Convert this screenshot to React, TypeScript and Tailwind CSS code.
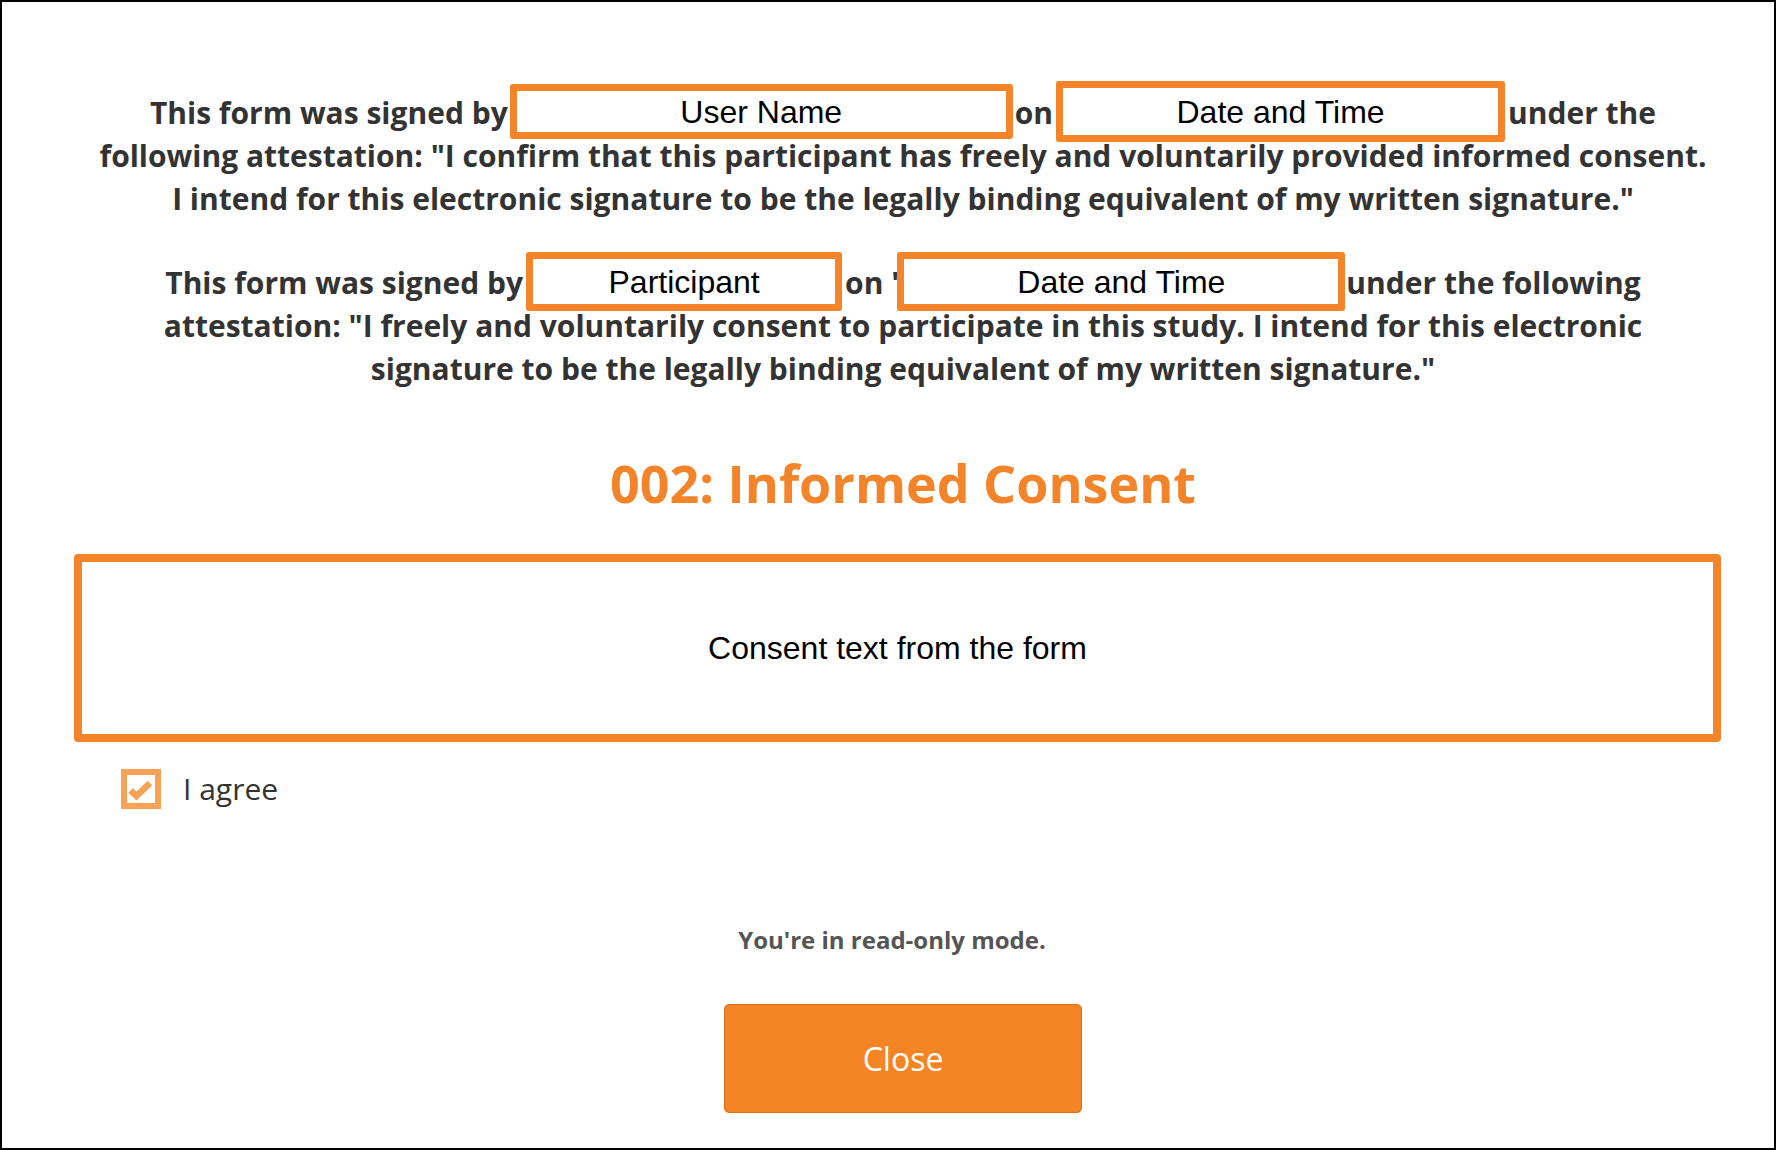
import React from "react";

function Box({ w, h, m, children }: { w: string; h: string; m: string; children: React.ReactNode }) {
  return (
    <span
      className={`relative -top-[4px] inline-flex items-center justify-center align-middle box-border border-[7px] border-[#F4842A] rounded-[3px] bg-white font-['Liberation_Sans',Arial,sans-serif] font-normal text-black text-[32px] leading-none ${w} ${h} ${m}`}
    >
      {children}
    </span>
  );
}

export default function App() {
  return (
    <div className="w-full h-[1150px] box-border border-2 border-black bg-white overflow-hidden font-['Open_Sans',sans-serif]">
      <div className="flex flex-col items-center">
        <p className="mt-[89px] pl-[30px] text-center text-[30px] leading-[43px] font-bold text-[#333333] whitespace-nowrap">
          This form was signed by
          <Box w="w-[503px]" h="h-[55px]" m="-my-[12px] mx-[2px]">User Name</Box>
          on
          <Box w="w-[449px]" h="h-[61px]" m="-my-[15px] mx-[3px]">Date and Time</Box>
          under the
          <br />
          following attestation: "I confirm that this participant has freely and voluntarily provided informed consent.
          <br />
          I intend for this electronic signature to be the legally binding equivalent of my written signature."
        </p>

        <p className="mt-[41px] pl-[30px] text-center text-[30px] leading-[43px] font-bold text-[#333333] whitespace-nowrap">
          This form was signed by
          <Box w="w-[316px]" h="h-[59px]" m="-my-[14px] mx-[3px]">Participant</Box>
          on "
          <Box w="w-[448px]" h="h-[59px]" m="-my-[14px] -ml-[8px] mr-[1px]">Date and Time</Box>
          under the following
          <br />
          attestation: "I freely and voluntarily consent to participate in this study. I intend for this electronic
          <br />
          signature to be the legally binding equivalent of my written signature."
        </p>

        <h1 className="mt-[62px] pl-[30px] text-center text-[52px] leading-[62px] font-bold text-[#F4842A]">
          002: Informed Consent
        </h1>

        <div className="mt-[40px] self-stretch ml-[72px] mr-[53px] h-[188px] box-border border-[8px] border-[#F4842A] rounded-[4px] flex items-center justify-center">
          <span className="font-['Liberation_Sans',Arial,sans-serif] text-[32px] text-black">Consent text from the form</span>
        </div>

        <div className="mt-[27px] self-stretch ml-[119px] flex items-center gap-[22px] h-[40px]">
          <div className="w-[40px] h-[40px] box-border border-[6px] border-[#F8A257] bg-white">
            <svg width="28" height="28" viewBox="0 0 28 28">
              <polyline points="3.5,15.5 9.5,21 23,8" fill="none" stroke="#F8A257" strokeWidth="6.5" strokeLinecap="butt" strokeLinejoin="miter" />
            </svg>
          </div>
          <span className="text-[30px] leading-[40px] text-[#333333]">I agree</span>
        </div>

        <p className="mt-[115px] pl-[8px] text-[24px] leading-[32px] font-bold text-[#555555]">
          You're in read-only mode.
        </p>

        <button className="mt-[48px] ml-[30px] w-[358px] h-[109px] box-border border border-[#D8701C] rounded-[5px] bg-[#F48424] text-white text-[32px] font-normal">
          Close
        </button>
      </div>
    </div>
  );
}
